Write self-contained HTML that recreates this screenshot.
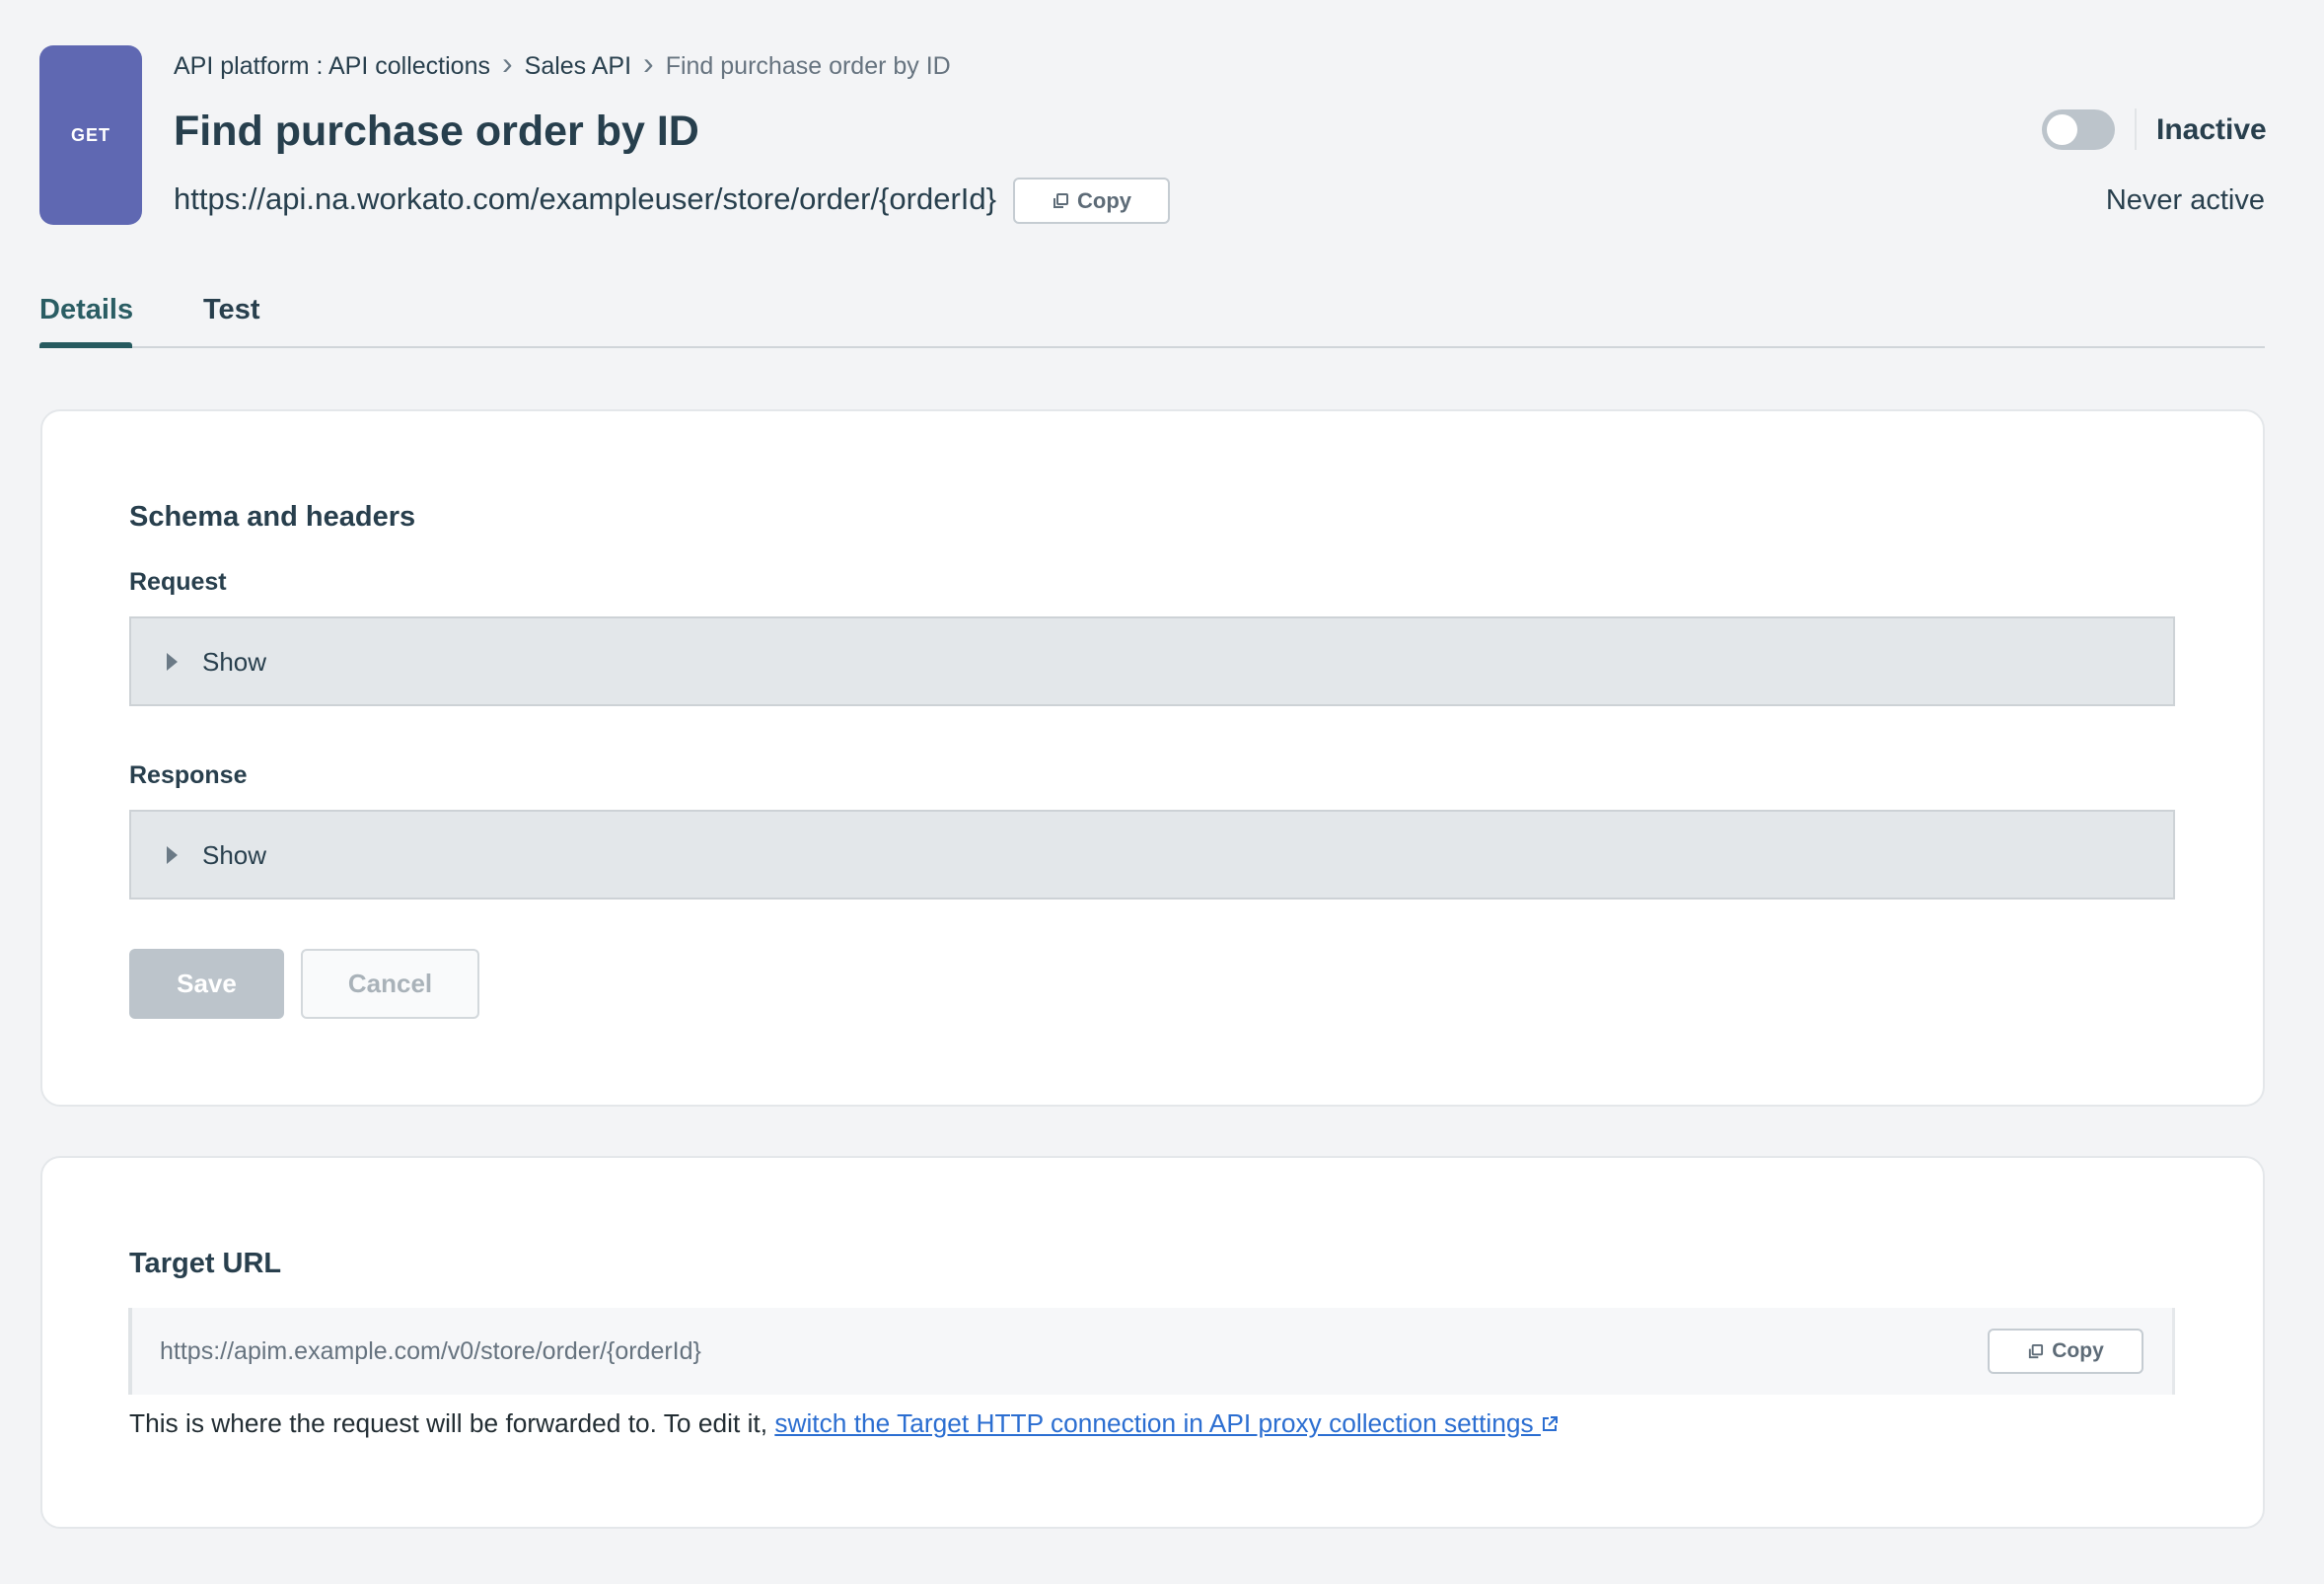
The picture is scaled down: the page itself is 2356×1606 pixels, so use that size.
<!DOCTYPE html>
<html><head><meta charset="utf-8"><style>
*{box-sizing:border-box;margin:0;padding:0}
body{width:2356px;height:1606px;background:#f3f4f6;font-family:"Liberation Sans",sans-serif;color:#283f4d;position:relative;overflow:hidden}
.a{position:absolute;white-space:nowrap}
.get{left:40px;top:46px;width:104px;height:182px;background:#5f68b2;border-radius:14px;color:#fff;font-weight:bold;font-size:18px;letter-spacing:1px;display:flex;align-items:center;justify-content:center}
.copy{background:#fff;border:2px solid #c5ccd2;border-radius:6px;color:#5d6b77;font-weight:bold;display:flex;align-items:center;justify-content:center;gap:8px}
.card{position:absolute;left:41px;width:2255px;background:#fff;border:2px solid #e4e7ea;border-radius:20px}
.box{position:absolute;left:131px;width:2074px;height:91px;background:#e3e7ea;border:2px solid #cdd2d6}
.tri{position:absolute;left:36px;top:35px;width:0;height:0;border-left:11px solid #6b7a86;border-top:9px solid transparent;border-bottom:9px solid transparent}
.show{position:absolute;left:72px;top:29px;font-size:26px}
.chev{color:#6b7a86;margin:0 12px;font-size:32px;line-height:20px}
</style></head><body>
<div class="a get">GET</div>
<div class="a" style="left:176px;top:53px;font-size:25px;color:#283f4d">API platform : API collections<span class="chev">›</span>Sales API<span class="chev">›</span><span style="color:#66737f">Find purchase order by ID</span></div>
<div class="a" style="left:176px;top:109px;font-size:43px;font-weight:bold;color:#273f4d">Find purchase order by ID</div>
<div class="a" style="left:176px;top:184px;font-size:31px;color:#273f4d">https://api.na.workato.com/exampleuser/store/order/{orderId}</div>
<div class="a copy" style="left:1027px;top:180px;width:159px;height:47px;font-size:22px"><svg width="18" height="18" viewBox="0 0 18 18" fill="none" stroke="#5d6b77" stroke-width="2"><rect x="6" y="2" width="10" height="10" rx="1"/><path d="M3 6v9h9"/></svg>Copy</div>
<div class="a" style="left:2070px;top:111px;width:74px;height:41px;border-radius:21px;background:#bcc4cb"><div style="position:absolute;left:5px;top:5px;width:31px;height:31px;border-radius:50%;background:#fff"></div></div>
<div class="a" style="left:2164px;top:110px;width:2px;height:42px;background:#e1e4e7"></div>
<div class="a" style="left:2186px;top:115px;font-size:30px;font-weight:bold">Inactive</div>
<div class="a" style="right:60px;top:187px;font-size:29px">Never active</div>
<div class="a" style="left:40px;top:298px;font-size:29px;font-weight:bold;color:#2a5d63">Details</div>
<div class="a" style="left:206px;top:298px;font-size:29px;font-weight:bold">Test</div>
<div class="a" style="left:40px;top:351px;width:2256px;height:2px;background:#d0d5d9"></div>
<div class="a" style="left:40px;top:347px;width:94px;height:6px;border-radius:3px 3px 0 0;background:#265a5f"></div>

<div class="card" style="top:415px;height:707px"></div>
<div class="a" style="left:131px;top:508px;font-size:29px;font-weight:bold">Schema and headers</div>
<div class="a" style="left:131px;top:576px;font-size:25px;font-weight:bold">Request</div>
<div class="box" style="top:625px"><div class="tri"></div><div class="show">Show</div></div>
<div class="a" style="left:131px;top:772px;font-size:25px;font-weight:bold">Response</div>
<div class="box" style="top:821px"><div class="tri"></div><div class="show">Show</div></div>
<div class="a" style="left:131px;top:962px;width:157px;height:71px;background:#bcc4cb;border-radius:6px;color:#fff;font-weight:bold;font-size:26px;display:flex;align-items:center;justify-content:center">Save</div>
<div class="a" style="left:305px;top:962px;width:181px;height:71px;background:#f9fafb;border:2px solid #d3d8dc;border-radius:6px;color:#a9b2b9;font-weight:bold;font-size:26px;display:flex;align-items:center;justify-content:center">Cancel</div>

<div class="card" style="top:1172px;height:378px"></div>
<div class="a" style="left:131px;top:1265px;font-size:29px;font-weight:bold">Target URL</div>
<div class="a" style="left:130px;top:1326px;width:2075px;height:88px;background:#f6f7f9;border-left:4px solid #dfe3e6;border-right:3px solid #e5e8eb"></div>
<div class="a" style="left:162px;top:1356px;font-size:25px;color:#66737f">https://apim.example.com/v0/store/order/{orderId}</div>
<div class="a copy" style="left:2015px;top:1347px;width:158px;height:46px;font-size:21px"><svg width="17" height="17" viewBox="0 0 18 18" fill="none" stroke="#5d6b77" stroke-width="2"><rect x="6" y="2" width="10" height="10" rx="1"/><path d="M3 6v9h9"/></svg>Copy</div>
<div class="a" style="left:131px;top:1428px;font-size:26.3px;color:#222d33">This is where the request will be forwarded to. To edit it, <span style="color:#2b6ed1;text-decoration:underline">switch the Target HTTP connection in API proxy collection settings </span> <svg width="18" height="18" viewBox="0 0 18 18" fill="none" stroke="#2b6ed1" stroke-width="2" style="vertical-align:-1px"><path d="M8 3H3v12h12v-5M10 2h6v6M16 2L8 10"/></svg></div>
</body></html>
